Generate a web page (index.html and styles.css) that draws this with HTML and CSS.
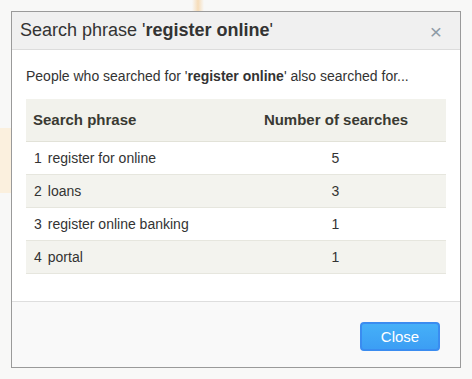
FILE: index.html
```html
<!DOCTYPE html>
<html lang="en">
<head>
    <meta charset="UTF-8">
    <title>Search phrase</title>
    <link rel="stylesheet" href="styles.css">
</head>
<body>
    <div class="backdrop">
        <div class="bg-spike"></div>
        <div class="bg-block"></div>
    </div>
    <div class="modal">
        <div class="modal-header">
            <h2>Search phrase '<b>register online</b>'</h2>
            <span class="close-x">&times;</span>
        </div>
        <div class="modal-body">
            <p class="intro">People who searched for '<b>register online</b>' also searched for...</p>
            <table class="phrases">
                <thead>
                    <tr>
                        <th class="col-phrase">Search phrase</th>
                        <th class="col-count">Number of searches</th>
                    </tr>
                </thead>
                <tbody>
                    <tr><td><span class="rank">1</span>register for online</td><td class="count">5</td></tr>
                    <tr><td><span class="rank">2</span>loans</td><td class="count">3</td></tr>
                    <tr><td><span class="rank">3</span>register online banking</td><td class="count">1</td></tr>
                    <tr><td><span class="rank">4</span>portal</td><td class="count">1</td></tr>
                </tbody>
            </table>
        </div>
        <div class="modal-footer">
            <button class="btn-close">Close</button>
        </div>
    </div>
</body>
</html>
```

FILE: styles.css
```css
* {
    box-sizing: border-box;
}
body {
    margin: 0;
    padding: 11px;
    width: 472px;
    height: 379px;
    overflow: hidden;
    font-family: "Liberation Sans", Arial, sans-serif;
    background-color: #f8f8f7;
    color: #333;
}
.backdrop {
    position: absolute;
    top: 0;
    left: 0;
    width: 472px;
    height: 379px;
}
.bg-spike {
    position: absolute;
    left: 192px;
    top: 0;
    width: 12px;
    height: 12px;
    background: linear-gradient(to right, transparent, #f6dcb8, transparent);
}
.bg-block {
    position: absolute;
    left: 0;
    top: 128px;
    width: 11px;
    height: 65px;
    background-color: #fbf0de;
}
.modal {
    position: relative;
    width: 450px;
    height: 357px;
    background-color: #fff;
    border: 1px solid #9a9a9a;
    display: flex;
    flex-direction: column;
}
.modal-header {
    height: 38px;
    background-color: #f0f0f0;
    border-bottom: 1px solid #dcdcdc;
    display: flex;
    align-items: center;
    justify-content: space-between;
    padding: 0 18px 0 8px;
}
.modal-header h2 {
    margin: 0;
    font-size: 18px;
    font-weight: normal;
    color: #333;
}
.close-x {
    font-size: 21px;
    color: #8e9ba6;
    line-height: 1;
    margin-top: 1px;
}
.modal-body {
    flex: 1;
    padding: 17px 14px 0 14px;
}
.intro {
    margin: 0 0 14px 0;
    font-size: 14px;
    line-height: 18px;
}
.phrases {
    width: 420px;
    border-collapse: collapse;
    font-size: 14px;
}
.phrases th {
    height: 42px;
    background-color: #f2f2ec;
    color: #3a3a33;
    font-size: 15px;
    border-bottom: 1px solid #e2e2d8;
}
.col-phrase {
    width: 200px;
    text-align: left;
    padding-left: 7px;
}
.col-count {
    text-align: center;
}
.phrases td {
    height: 33px;
    border-bottom: 1px solid #e6e6de;
    padding-left: 8px;
}
.phrases tbody tr:nth-child(even) td {
    background-color: #f3f3ee;
}
.rank {
    margin-right: 6px;
}
.phrases td.count {
    text-align: center;
    padding-left: 0;
}
.modal-footer {
    height: 66px;
    background-color: #f9f9f9;
    border-top: 1px solid #dedede;
    display: flex;
    justify-content: flex-end;
    align-items: center;
    padding: 0 20px 0 0;
}
.btn-close {
    width: 80px;
    height: 29px;
    font-family: "Liberation Sans", Arial, sans-serif;
    font-size: 15px;
    color: #fff;
    background: linear-gradient(#45b0f8, #3c9ef4);
    border: 2px solid #3a8cf0;
    border-radius: 4px;
    margin-top: 3px;
}
```
